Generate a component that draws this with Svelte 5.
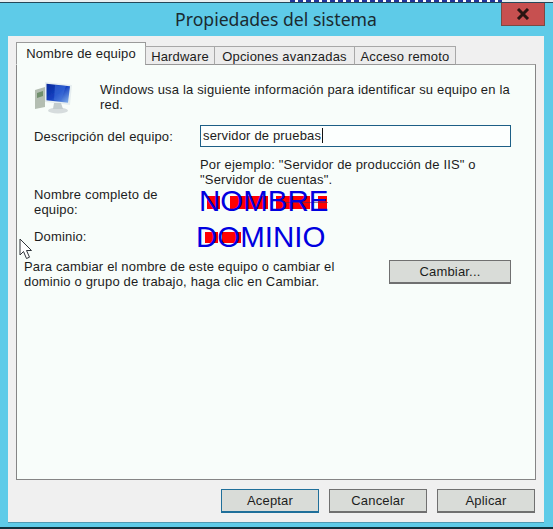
<script>
  const tabs = ['Nombre de equipo', 'Hardware', 'Opciones avanzadas', 'Acceso remoto'];
  let active = 0;

  // red blocks over the hidden computer name / domain: [left, width]
  const nameBlocks = [[7, 13], [30, 38], [76, 34], [118, 9]];
  const domainBlocks = [[5, 13], [22, 19]];
</script>

<div class="screen">
  <div class="strip"></div>
  <div class="window">
    <header class="titlebar">
      <h1>Propiedades del sistema</h1>
      <button class="close" aria-label="Cerrar">
        <svg viewBox="0 0 14 12" width="14" height="12">
          <path d="M2 1l10 10M12 1L2 11" fill="none" stroke="#2a1512" stroke-width="3" />
        </svg>
      </button>
    </header>

    <div class="panel">
      <div class="tabs">
        {#each tabs as tab, i}
          <button class="tab" class:active={i === active} on:click={() => (active = i)}>{tab}</button>
        {/each}
      </div>

      <section class="pane">
        <div class="intro">
          <svg class="pc" viewBox="0 0 38 32" width="38" height="32">
            <defs>
              <linearGradient id="screen" x1="0" y1="0" x2="1" y2="1">
                <stop offset="0" stop-color="#0a2a9c" />
                <stop offset="0.5" stop-color="#1440c0" />
                <stop offset="1" stop-color="#8ab8ee" />
              </linearGradient>
              <filter id="soft"><feGaussianBlur stdDeviation="0.35" /></filter>
            </defs>
            <g filter="url(#soft)">
              <path d="M0 8l10-3v20l-10 2z" fill="#b4beb2" />
              <path d="M2 11l6-2v5l-6 2z" fill="#6f8f6c" />
              <path d="M10 0l27 3-2 20-25-3z" fill="#e6eef0" />
              <path d="M11.500 1.800l23.500 2.500-2 16.500-21.500-2.500z" fill="url(#screen)" />
              <path d="M20 3l11 1-5 15-7-1z" fill="#3f72dc" opacity="0.55" />
              <ellipse cx="23" cy="28.500" rx="10" ry="3" fill="#d6dcdd" />
              <path d="M19 21h7l2 6h-10z" fill="#c3cccd" />
            </g>
          </svg>
          <p>Windows usa la siguiente información para identificar su equipo en la red.</p>
        </div>

        <div class="form">
          <label for="desc">Descripción del equipo:</label>
          <div class="field" id="desc">servidor de pruebas<span class="caret"></span></div>

          <p class="hint">Por ejemplo: "Servidor de producción de IIS" o "Servidor de cuentas".</p>

          <span class="name-label">Nombre completo de equipo:</span>
          <div class="value">
            {#each nameBlocks as [left, width]}
              <span class="redact" style="left: {left}px; width: {width}px"></span>
            {/each}
            <span class="smear"></span>
            <span class="stamp">NOMBRE</span>
          </div>

          <span class="domain-label">Dominio:</span>
          <div class="value">
            {#each domainBlocks as [left, width]}
              <span class="redact dom" style="left: {left}px; width: {width}px"></span>
            {/each}
            <span class="stamp dom">DOMINIO</span>
          </div>
        </div>

        <div class="change">
          <p>Para cambiar el nombre de este equipo o cambiar el dominio o grupo de trabajo, haga clic en Cambiar.</p>
          <button class="btn wide">Cambiar...</button>
        </div>

        <svg class="cursor" viewBox="0 0 14 22" width="14" height="22">
          <path d="M1 1v16l3.500-3.500 3 7 3-1.300-3-6.700h5z" fill="#fff" stroke="#30343a" stroke-width="1" />
        </svg>
      </section>

      <footer class="actions">
        <button class="btn default">Aceptar</button>
        <button class="btn">Cancelar</button>
        <button class="btn">Aplicar</button>
      </footer>
    </div>
  </div>
</div>

<style>
  :global(body) {
    margin: 0;
    background: #5ecbe8;
  }

  .screen {
    width: 553px;
    height: 529px;
    display: flex;
    flex-direction: column;
  }

  /* sliver of the page behind the dialog */
  .strip {
    flex: none;
    height: 2px;
    background:
      repeating-linear-gradient(90deg, #22349a 0 5px, #fff 5px 8px) 290px 0 / 212px 100% no-repeat,
      #e8eef0;
  }

  .window {
    box-sizing: border-box;
    flex: 1;
    min-height: 0;
    display: flex;
    flex-direction: column;
    padding: 0 9px 5px 8px;
    background: #5ecbe8;
    border-top: 1px solid #24485a;
    border-bottom: 2px solid #10303c;
    font-family: "Liberation Sans", sans-serif;
    font-size: 13px;
    line-height: 15px;
    letter-spacing: 0.17px;
    color: #1c1c1c;
  }

  .titlebar {
    position: relative;
    height: 33px;
    flex: none;
    display: flex;
    justify-content: center;
    align-items: center;
  }

  h1 {
    margin: 0;
    font-family: "Noto Sans", sans-serif;
    font-size: 17.6px;
    font-weight: 400;
    letter-spacing: 0;
    color: #1a2a30;
  }

  .close {
    position: absolute;
    top: 0;
    right: -1px;
    width: 44px;
    height: 23px;
    padding: 0;
    border: 1px solid #7a4a44;
    border-top: none;
    background: #c75050;
    display: flex;
    align-items: center;
    justify-content: center;
  }

  .panel {
    flex: 1;
    display: flex;
    flex-direction: column;
    padding: 7px 8px 0;
    background: #f0f0f0;
    box-shadow: 0 1px 0 #4e9ab4;
  }

  .tabs {
    display: flex;
    align-items: flex-end;
    height: 22px;
    flex: none;
    margin-bottom: -1px;
    position: relative;
    z-index: 1;
  }

  .tab {
    height: 19px;
    padding: 1px 0 0;
    margin-left: -1px;
    border: 1px solid #a8a8a8;
    border-bottom: 1px solid #979797;
    background: #ececec;
    font: inherit;
    letter-spacing: inherit;
    color: inherit;
    white-space: nowrap;
  }

  .tab:nth-child(2) { width: 70px; }
  .tab:nth-child(3) { width: 141px; }
  .tab:nth-child(4) { width: 102px; }

  .tab.active {
    width: 130px;
    height: 23px;
    margin-left: 0;
    padding: 0 0 1px;
    background: #f8fdfa;
    border-color: #9a9a9a;
    border-bottom-color: #f8fdfa;
  }

  .pane {
    position: relative;
    flex: none;
    height: 416px;
    box-sizing: border-box;
    padding: 17px 24px 0 7px;
    background: #f8fdfa;
    border: 1px solid #858585;
    border-top-color: #a0a0a0;
  }

  .intro {
    display: flex;
    gap: 27px;
    padding-left: 11px;
    align-items: flex-start;
  }

  .intro p {
    margin: 0;
    width: 414px;
  }

  .pc { flex: none; }

  .form {
    display: grid;
    grid-template-columns: 166px 1fr;
    margin-top: 11px;
    padding-left: 10px;
    align-items: start;
  }

  label {
    align-self: center;
  }

  .field {
    box-sizing: border-box;
    height: 22px;
    padding: 2px 0 0 2px;
    border: 1px solid #1d5f86;
    background: #fcfffe;
    display: flex;
    align-items: flex-start;
  }

  .caret {
    width: 1px;
    height: 15px;
    background: #111;
    margin-left: 1px;
  }

  .hint {
    grid-column: 2;
    margin: 10px 0 0;
    width: 300px;
  }

  .name-label {
    width: 140px;
  }

  .domain-label {
    margin-top: 8px;
  }

  .value {
    position: relative;
    height: 34px;
  }

  .redact {
    position: absolute;
    top: 9px;
    height: 13px;
    background: #f00;
  }

  .redact.dom {
    top: 11px;
    height: 11px;
  }

  .smear {
    position: absolute;
    top: 15px;
    left: 84px;
    width: 44px;
    height: 1px;
    background: #5a2a50;
    opacity: 0.6;
  }

  .stamp {
    position: absolute;
    top: -3px;
    left: -1px;
    font-size: 29.5px;
    line-height: 34px;
    letter-spacing: 0;
    color: #0000e0;
    white-space: nowrap;
  }

  .stamp.dom {
    top: -1px;
    left: -4px;
  }

  .change {
    display: flex;
    justify-content: space-between;
    align-items: flex-start;
    margin-top: 4px;
  }

  .change p {
    margin: 0;
    width: 340px;
  }

  .btn {
    box-sizing: border-box;
    width: 98px;
    height: 24px;
    padding: 0;
    border: 1px solid #707070;
    border-bottom-width: 2px;
    background: #d9dcd8;
    font: inherit;
    letter-spacing: inherit;
    color: inherit;
  }

  .btn.wide {
    width: 122px;
    margin-top: 1px;
  }

  .btn.default {
    border-color: #1f6f9a;
  }

  .cursor {
    position: absolute;
    left: 2px;
    top: 173px;
  }

  .actions {
    display: flex;
    justify-content: flex-end;
    gap: 10px;
    padding: 9px 1px 0 0;
  }
</style>
